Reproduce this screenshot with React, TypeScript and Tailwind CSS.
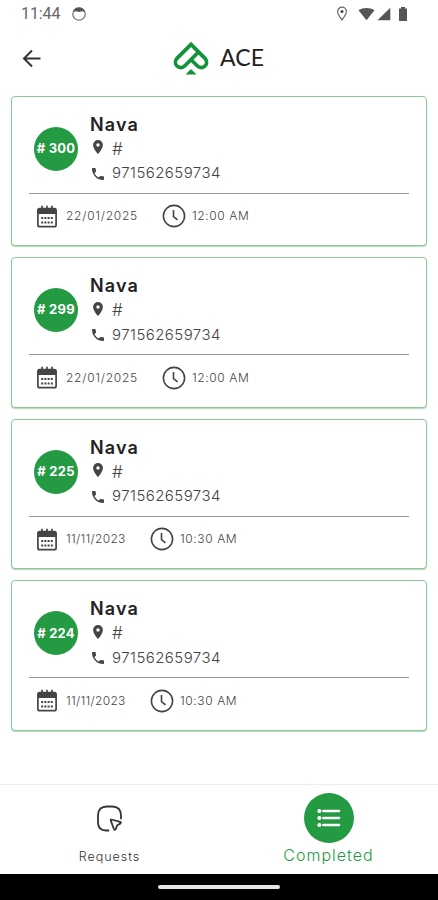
import React from 'react';

interface Order {
  id: number;
  name: string;
  phone: string;
  date: string;
  time: string;
  dateClass: string;
}

const orders: Order[] = [
  { id: 300, name: 'Nava', phone: '971562659734', date: '22/01/2025', time: '12:00 AM', dateClass: 'w-[72px] tracking-[0.75px]' },
  { id: 299, name: 'Nava', phone: '971562659734', date: '22/01/2025', time: '12:00 AM', dateClass: 'w-[72px] tracking-[0.75px]' },
  { id: 225, name: 'Nava', phone: '971562659734', date: '11/11/2023', time: '10:30 AM', dateClass: 'w-[60px] tracking-[0.3px]' },
  { id: 224, name: 'Nava', phone: '971562659734', date: '11/11/2023', time: '10:30 AM', dateClass: 'w-[60px] tracking-[0.3px]' },
];

const StatusBar = () => (
  <div className="flex h-7 shrink-0 items-center pl-[21px] pr-[30px] text-[#666]">
    <span className="w-10 font-[Roboto,sans-serif] text-[16px] leading-[30px] tracking-[-0.1px]">11:44</span>
    <svg className="ml-[10px]" width="16" height="16" viewBox="0 0 16 16" fill="none" stroke="#777" strokeWidth="1.3">
      <circle cx="8" cy="8" r="6.2" />
      <path d="M2 6C2.800 2.800 5.200 1.500 8 1.500s5.200 1.300 6 4.500L11 5.200 8 6l-3-.8z" fill="#555" stroke="none" />
    </svg>
    <div className="ml-auto flex items-center">
      <svg width="12" height="16" viewBox="0 0 12 16" fill="none" stroke="#666" strokeWidth="1.2">
        <path d="M6 14C4 11 1.6 8.500 1.600 5.600a4.400 4.400 0 0 1 8.800 0C10.400 8.500 8 11 6 14z" />
        <circle cx="6" cy="5.600" r="1.500" fill="#444" stroke="none" />
      </svg>
      <svg className="ml-[10px]" width="17" height="14" viewBox="0 0 17 14" fill="#555">
        <path d="M.5 3.300C5 .1 12 .1 16.500 3.300L8.500 13.300z" />
      </svg>
      <svg className="ml-[2px]" width="14" height="14" viewBox="0 0 14 14" fill="#555">
        <path d="M13.300.7v12.600H.5z" />
      </svg>
      <svg className="ml-[7px]" width="10" height="16" viewBox="0 0 10 16" fill="#555">
        <path d="M3 1h4v1.500h2V15H1V2.500h2z" />
      </svg>
    </div>
  </div>
);

const Header = () => (
  <header className="flex h-[67px] shrink-0 items-start pl-[22px] pt-[13px]">
    <svg className="mt-[8px]" width="20" height="20" viewBox="0 0 20 20" fill="none" stroke="#333" strokeWidth="2">
      <path d="M18.500 9.500H2.500M10 1.500l-8 8 8 8" />
    </svg>
    <svg className="ml-[131px]" width="36" height="36" viewBox="0 0 36 36" fill="none" stroke="#119337" strokeWidth="3.700">
      <path d="M25.300 11.300L11.600 25A5.370 5.370 0 0 1 4 17.400L18 3.400l14 14A5.370 5.370 0 0 1 24.400 25l-6-6" />
      <path d="M18 28l5.500 5.600h-11z" fill="#119337" stroke="none" />
    </svg>
    <h1 className="ml-[11px] mt-px font-[Lato,sans-serif] text-[23px] leading-[30px] tracking-[0.1px] text-[#222]">ACE</h1>
  </header>
);

const CalendarIcon = () => (
  <svg width="20" height="23" viewBox="0 0 20 23" fill="none" stroke="#444">
    <rect x=".9" y="3.500" width="18.200" height="18.200" rx="1.800" strokeWidth="1.700" />
    <path d="M1 3.500h18v5.500H1z" fill="#444" strokeWidth="0" />
    <path d="M5 .7v4M10 .7v4M15 .7v4" strokeWidth="1.700" />
    <path d="M4.200 13h12M4.200 17.500h12" strokeWidth="2" strokeDasharray="2 1.200" />
  </svg>
);

const ClockIcon = () => (
  <svg width="24" height="24" viewBox="0 0 24 24" fill="none" stroke="#444" strokeWidth="1.600">
    <circle cx="12" cy="12" r="10.600" />
    <path d="M11.500 6v6.500l4 3.300" />
  </svg>
);

const OrderCard = ({ order }: { order: Order }) => (
  <article className="h-[150.600px] shrink-0 rounded-[4px] border border-[#8cc796] bg-white px-[17px] shadow-[0_1px_1px_#b5d9ba]">
    <div className="flex h-[97px] items-start border-b border-[#999] pl-[5px]">
      <div className="mt-[30px] flex size-[44px] shrink-0 items-center justify-center rounded-full bg-[#249a43] text-[13px] font-bold tracking-[0.25px] whitespace-nowrap text-white">
        # {order.id}
      </div>
      <div className="ml-3 pt-[16px]">
        <h2 className="text-[18px] leading-6 font-semibold tracking-[1.1px] text-[#222]">{order.name}</h2>
        <div className="flex h-6 items-center">
          <svg className="mb-[3px] ml-[2px]" width="12" height="14" viewBox="5 2 14 20" fill="#444">
            <path fillRule="evenodd" d="M12 2a7 7 0 0 0-7 7c0 5.250 7 13 7 13s7-7.750 7-13a7 7 0 0 0-7-7zm0 9.500a2.500 2.500 0 1 1 0-5 2.500 2.500 0 0 1 0 5z" />
          </svg>
          <span className="ml-[8px] text-[17px] leading-6 font-light text-[#444]">#</span>
        </div>
        <div className="flex h-[26px] items-center">
          <svg className="ml-[2px]" width="12" height="12" viewBox="3 3 18 18" fill="#444">
            <path d="M6.620 10.790a15.150 15.150 0 0 0 6.590 6.590l2.200-2.200a1 1 0 0 1 1.020-.24c1.120.37 2.330.57 3.570.57a1 1 0 0 1 1 1V20a1 1 0 0 1-1 1C10.610 21 3 13.390 3 4a1 1 0 0 1 1-1h3.500a1 1 0 0 1 1 1c0 1.250.2 2.450.57 3.570a1 1 0 0 1-.25 1.020z" />
          </svg>
          <span className="ml-[8px] text-[15px] font-light tracking-[0.45px] text-[#444]">{order.phone}</span>
        </div>
      </div>
    </div>
    <div className="flex h-[45px] items-center pl-[8px] text-[12px] font-light whitespace-nowrap text-[#444]">
      <CalendarIcon />
      <span className={`ml-[9px] ${order.dateClass}`}>{order.date}</span>
      <div className="ml-[24px]">
        <ClockIcon />
      </div>
      <span className="ml-[6px] tracking-[0.6px]">{order.time}</span>
    </div>
  </article>
);

const BottomNav = () => (
  <nav className="grid h-[90px] shrink-0 grid-cols-2 border-t border-[#eee] bg-white">
    <div className="flex flex-col items-center">
      <svg className="mt-[20px]" width="28" height="28" viewBox="0 0 28 28" fill="none" stroke="#333" strokeWidth="1.800" strokeLinejoin="round" strokeLinecap="round">
        <path d="M12.500 25.500H10c-5 0-8-3-8-8v-7c0-6 3-9 9-9h5c6 0 9 3 9 9v3" />
        <path d="M15.400 14.500l8.700 2.300c1 .3 1 1.300.1 1.800l-2.900 1.600-1.600 3.900c-.5 1-1.500.9-1.800-.1l-3.100-8.400c-.3-.8 0-1.300.6-1.100z" />
      </svg>
      <span className="mt-[14px] text-[12.500px] leading-[20px] font-light tracking-[1px] text-[#333]">Requests</span>
    </div>
    <div className="flex flex-col items-center">
      <div className="mt-[8px] flex size-[50px] items-center justify-center rounded-full bg-[#249a43]">
        <svg width="24" height="20" viewBox="0 0 24 20" fill="none" stroke="white" strokeWidth="2.300" strokeLinecap="round">
          <path d="M6.200 3h16M6.200 10h16M6.200 17h16" />
          <path d="M2.300 3h.1M2.300 10h.1M2.300 17h.1" strokeWidth="4" />
        </svg>
      </div>
      <span className="mt-[2px] text-[16px] leading-5 font-light tracking-[1px] text-[#249a43]">Completed</span>
    </div>
  </nav>
);

export default function App() {
  return (
    <div className="flex h-[900px] w-[438px] flex-col overflow-hidden bg-white font-[Inter,sans-serif]">
      <StatusBar />
      <Header />
      <main className="flex flex-1 flex-col gap-[11px] px-[11px] pt-[0.500px]">
        {orders.map((order) => (
          <OrderCard key={order.id} order={order} />
        ))}
      </main>
      <BottomNav />
      <div className="flex h-[26px] shrink-0 items-center justify-center bg-black">
        <div className="h-[4px] w-[122px] rounded-full bg-[#e5e5e5]" />
      </div>
    </div>
  );
}
